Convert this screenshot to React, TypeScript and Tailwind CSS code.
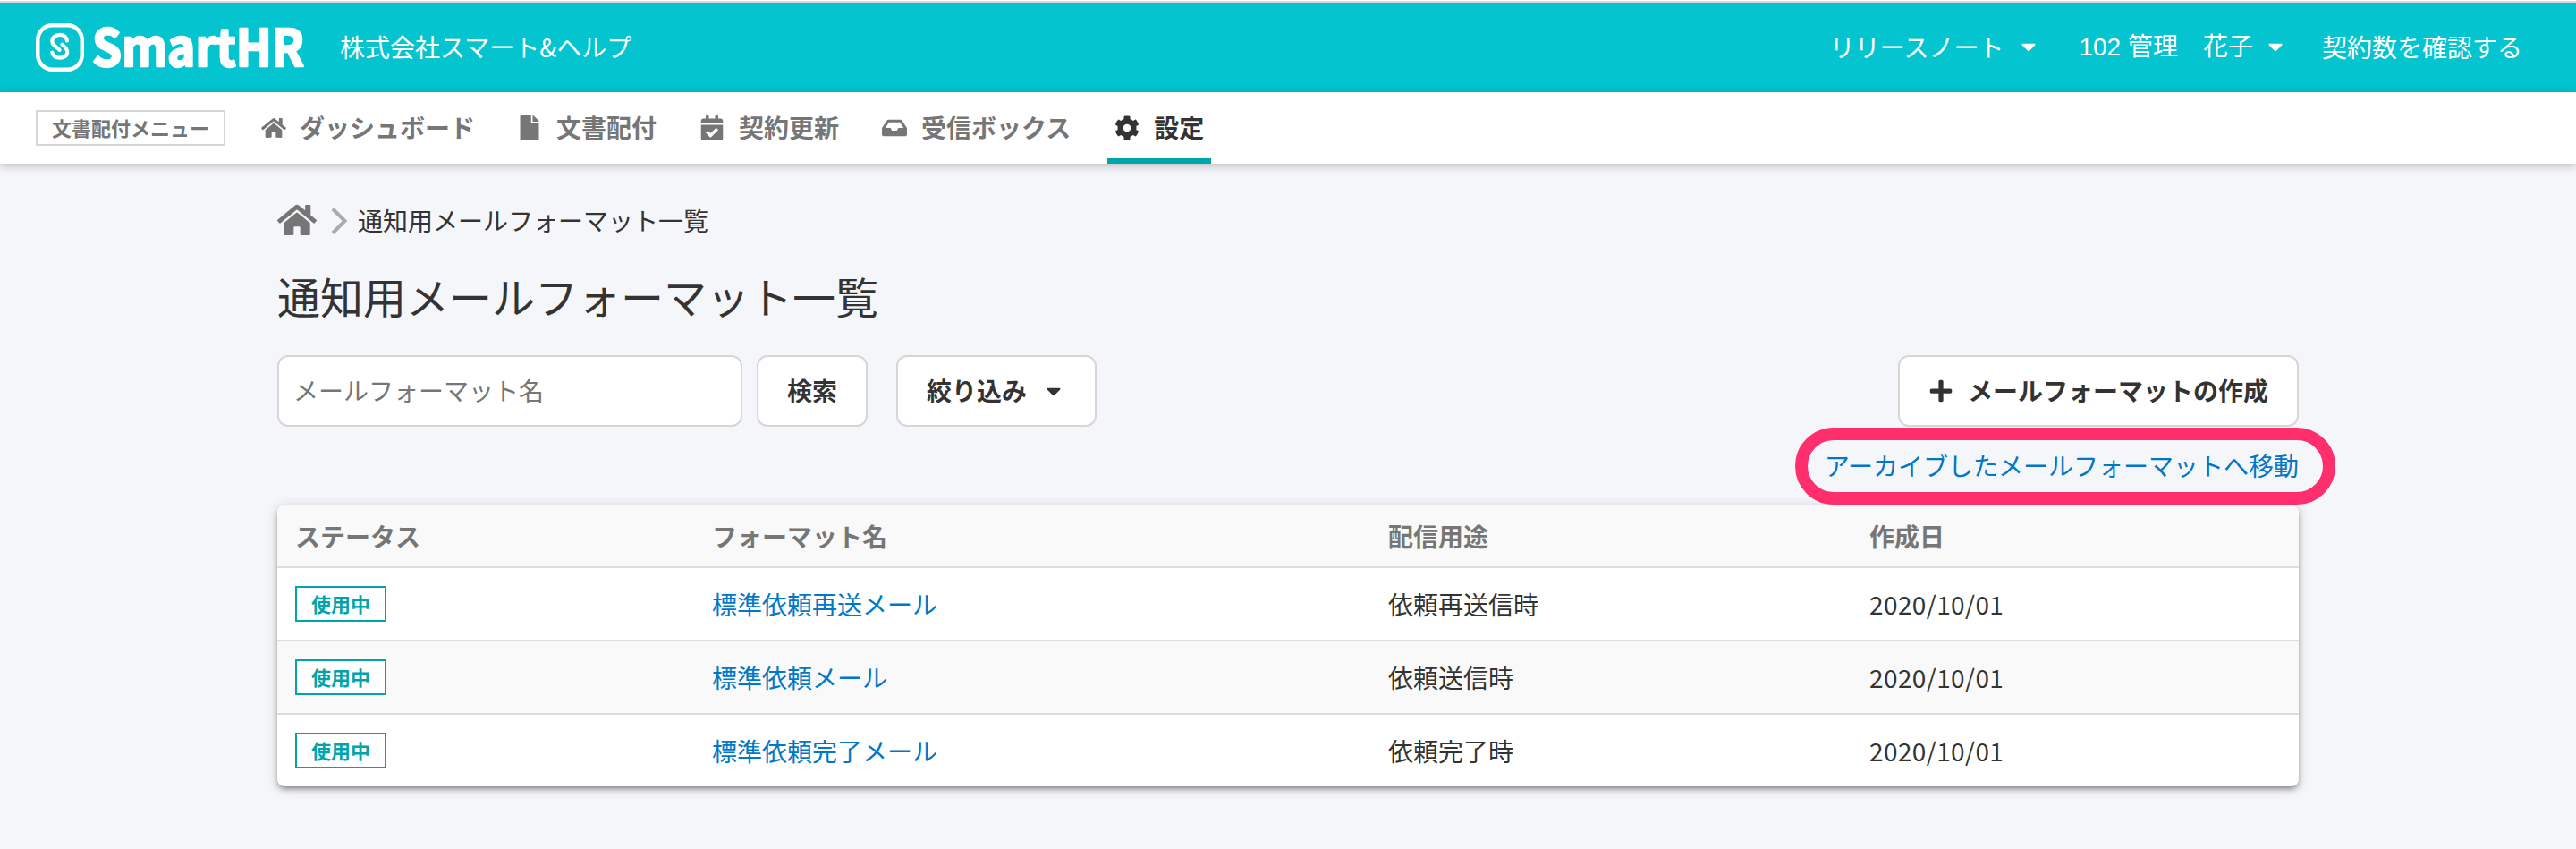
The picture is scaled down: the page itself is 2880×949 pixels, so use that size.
import React from "react";
import type { ReactNode } from "react";
import {
  FaCalendarCheck,
  FaCaretDown,
  FaCog,
  FaFile,
  FaHome,
  FaInbox,
  FaPlus,
} from "react-icons/fa";

const rows = [
  { name: "標準依頼再送メール", use: "依頼再送信時", date: "2020/10/01" },
  { name: "標準依頼メール", use: "依頼送信時", date: "2020/10/01" },
  { name: "標準依頼完了メール", use: "依頼完了時", date: "2020/10/01" },
];

function Logo() {
  return (
    <a className="flex h-[54px] items-center" href="#">
      <svg className="h-[54px] w-[54px]" viewBox="0 0 54 54" fill="none" stroke="#fff">
        <rect x="2.25" y="2.25" width="49.5" height="49.5" rx="16.5" strokeWidth="4.5" />
        <path
          d="M35 19.500C34.500 15.500 31 12.800 27 12.800C22 12.800 18.300 16 18.300 20.300C18.300 25.500 23.500 26 26.500 29.800M29.500 23.800C32.500 26.500 35.200 28 35.200 32.300C35.200 36.500 31.500 38.700 27 38.700C22.500 38.700 19 36.500 18.300 32.500"
          strokeWidth="4.2"
          strokeLinecap="round"
        />
      </svg>
      <svg className="ml-[7px] h-[100px] w-[245px] overflow-visible" viewBox="0 0 245 100">
        <text
          x="2"
          y="71"
          fill="#fff"
          stroke="#fff"
          strokeWidth="2.4"
          strokeLinejoin="round"
          textLength="237"
          lengthAdjust="spacingAndGlyphs"
          className="font-['Noto_Sans_CJK_JP',sans-serif] text-[57px] font-bold"
        >
          SmartHR
        </text>
      </svg>
    </a>
  );
}

function NavItem({
  icon,
  label,
  className,
  active,
}: {
  icon: ReactNode;
  label: string;
  className: string;
  active?: boolean;
}) {
  return (
    <a
      href="#"
      className={`flex h-20 items-center border-b-6 pt-[6px] font-bold ${
        active ? "border-[#00a5ab] text-[#333333]" : "border-transparent text-[#767676]"
      } ${className}`}
    >
      {icon}
      <span className="-mt-[2px]">{label}</span>
    </a>
  );
}

export default function App() {
  return (
    <div className="flex h-[949px] w-[2880px] flex-col overflow-hidden bg-[#f5f6fa] font-['Noto_Sans_CJK_JP',sans-serif] text-[28px] leading-[42px] whitespace-nowrap text-[#333333]">
      <div className="h-[3px] shrink-0 border-t border-white bg-[#d9d9d9]" />
      <header className="flex h-[100px] shrink-0 items-center bg-[#04c4cf] pl-10 text-white">
        <Logo />
        <span className="-mt-[3px] ml-[34px]">株式会社スマート&amp;ヘルプ</span>
        <div className="-mt-[3px] ml-auto flex items-center pr-[60px]">
          <span>リリースノート</span>
          <FaCaretDown className="ml-[15px] size-[26px]" />
          <span className="ml-[43px] whitespace-pre">
            <span className="font-['Liberation_Sans',sans-serif]">102 </span>
            管理　花子
          </span>
          <FaCaretDown className="ml-[12px] size-[26px]" />
          <span className="ml-[39px]">契約数を確認する</span>
        </div>
      </header>

      <nav className="relative flex h-20 shrink-0 bg-white pl-10 shadow-[0_2px_10px_rgba(51,51,51,0.3)]">
        <div className="mt-5 flex h-10 w-[212px] items-center justify-center border-2 border-[#d6d6d6] pb-[2px] text-[22px] leading-none font-bold text-[#767676]">
          文書配付メニュー
        </div>
        <NavItem className="ml-[40px]" icon={<FaHome className="mr-[15px] size-7" />} label="ダッシュボード" />
        <NavItem className="ml-[47px]" icon={<FaFile className="mr-[16px] size-7" />} label="文書配付" />
        <NavItem className="ml-[48px]" icon={<FaCalendarCheck className="mr-4 size-7" />} label="契約更新" />
        <NavItem className="ml-[48px]" icon={<FaInbox className="mr-4 size-7" />} label="受信ボックス" />
        <NavItem className="ml-[41px] px-2" icon={<FaCog className="mr-4 size-7" />} label="設定" active />
      </nav>

      <main className="flex w-[2570px] flex-col pl-[310px]">
        <div className="mt-[42px] flex h-[42px] items-center">
          <FaHome className="size-[44px] text-[#767676]" />
          <svg className="mt-[2px] ml-[16px] h-[30px] w-[19px]" viewBox="0 0 19 30" fill="none" stroke="#aaaaaa" strokeWidth="4">
            <path d="M2 1.500L15.500 15L2 28.500" />
          </svg>
          <span className="ml-[11px]">通知用メールフォーマット一覧</span>
        </div>
        <h1 className="mt-[27px] text-[48px] leading-[72px]">通知用メールフォーマット一覧</h1>

        <div className="mt-[31px] flex h-20">
          <input
            className="w-[520px] rounded-xl border-2 border-[#d6d6d6] bg-white px-4 pb-[2px] placeholder:text-[#767676]"
            placeholder="メールフォーマット名"
          />
          <button className="ml-4 w-[124px] rounded-xl border-2 border-[#d6d6d6] bg-white pb-[2px] font-bold">検索</button>
          <button className="ml-8 flex w-[224px] items-center rounded-xl border-2 border-[#d6d6d6] bg-white pl-8 font-bold">
            <span className="-mt-[2px]">絞り込み</span>
            <FaCaretDown className="ml-[17px] size-[26px]" />
          </button>
          <button className="ml-auto flex w-[448px] items-center rounded-xl border-2 border-[#d6d6d6] bg-white pl-8 font-bold">
            <FaPlus className="mr-4 size-7" />
            <span className="-mt-[2px]">メールフォーマットの作成</span>
          </button>
        </div>

        <div className="relative mt-[22px] flex h-[42px] justify-end text-[#0077c7]">
          <a href="#">アーカイブしたメールフォーマットへ移動</a>
          <div className="absolute -top-[21px] -right-[41px] z-10 h-[86px] w-[604px] rounded-[43px] border-[14px] border-[#ff2e6c]" />
        </div>

        <table className="mt-[24px] w-[2260px] table-fixed border-separate border-spacing-0 overflow-hidden rounded-lg bg-white text-left shadow-[0_4px_6px_-2px_rgba(51,51,51,0.55),0_2px_12px_rgba(51,51,51,0.25)]">
          <colgroup>
            <col className="w-[466px]" />
            <col className="w-[756px]" />
            <col className="w-[538px]" />
            <col />
          </colgroup>
          <thead>
            <tr className="h-[68px] bg-[#f9f9f9] text-[#767676] *:pl-5 *:font-bold">
              <th>ステータス</th>
              <th>フォーマット名</th>
              <th>配信用途</th>
              <th>作成日</th>
            </tr>
          </thead>
          <tbody>
            {rows.map((row) => (
              <tr
                key={row.name}
                className="h-[82px] *:border-t-2 *:border-[#dddddd] *:pl-5 even:bg-[#f9f9f9]"
              >
                <td>
                  <span className="flex h-10 w-[102px] items-center justify-center border-2 border-[#00a5ab] bg-white pb-[2px] text-[22px] leading-none font-bold text-[#00a5ab]">
                    使用中
                  </span>
                </td>
                <td>
                  <a href="#" className="text-[#0077c7]">
                    {row.name}
                  </a>
                </td>
                <td>{row.use}</td>
                <td className="tracking-[0.4px]">{row.date}</td>
              </tr>
            ))}
          </tbody>
        </table>
      </main>
    </div>
  );
}
